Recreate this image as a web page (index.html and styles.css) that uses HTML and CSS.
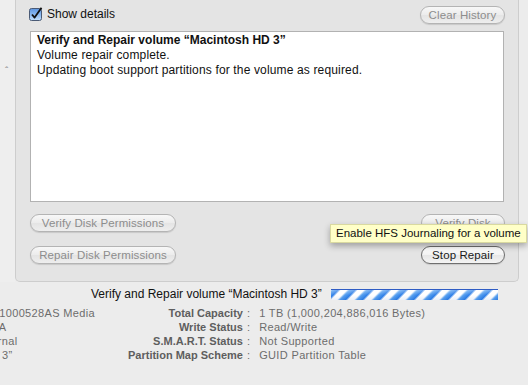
FILE: index.html
```html
<!DOCTYPE html>
<html lang="en">
<head>
    <meta charset="UTF-8">
    <title>Disk Utility - First Aid</title>
    <link rel="stylesheet" href="styles.css">
</head>
<body>
    <div class="window">
        <div class="upper">
            <div class="gutter"><span class="caret">ˆ</span></div>
            <div class="panel">
                <div class="panel-head">
                    <label class="check">
                        <span class="box">
                            <svg width="14" height="14" viewBox="0 0 14 14">
                                <defs>
                                    <linearGradient id="aqua" x1="0" y1="0" x2="0" y2="1">
                                        <stop offset="0" stop-color="#5d95e0"/>
                                        <stop offset="0.5" stop-color="#8ab8f0"/>
                                        <stop offset="1" stop-color="#c4e0fb"/>
                                    </linearGradient>
                                </defs>
                                <rect x="0.5" y="1.5" width="12" height="12" rx="2" fill="url(#aqua)" stroke="#4a5a75"/>
                                <path d="M3 7.5 L5.6 10.6 L12.5 0.8" fill="none" stroke="#111" stroke-width="1.8" stroke-linejoin="round"/>
                            </svg>
                        </span>
                        Show details
                    </label>
                    <button class="btn disabled clear">Clear History</button>
                </div>
                <div class="log">
                    <p class="log-title">Verify and Repair volume “Macintosh HD 3”</p>
                    <p>Volume repair complete.</p>
                    <p>Updating boot support partitions for the volume as required.</p>
                </div>
                <div class="actions">
                    <div class="col">
                        <button class="btn disabled wide">Verify Disk Permissions</button>
                        <button class="btn disabled wide">Repair Disk Permissions</button>
                    </div>
                    <div class="col">
                        <button class="btn disabled narrow">Verify Disk</button>
                        <button class="btn narrow">Stop Repair</button>
                    </div>
                </div>
                <div class="tooltip">Enable HFS Journaling for a volume</div>
            </div>
        </div>

        <div class="status">
            <span class="status-text">Verify and Repair volume “Macintosh HD 3”</span>
            <div class="progress"></div>
        </div>

        <div class="info">
            <div class="info-left">
                <div class="info-left-inner">
                    <div>ST31000528AS Media</div>
                    <div>SATA</div>
                    <div>Internal</div>
                    <div>“HD 3”</div>
                </div>
            </div>
            <div class="info-right">
                <span class="label">Total Capacity</span><span class="sep">:</span><span class="value">1 TB (1,000,204,886,016 Bytes)</span>
                <span class="label">Write Status</span><span class="sep">:</span><span class="value">Read/Write</span>
                <span class="label">S.M.A.R.T. Status</span><span class="sep">:</span><span class="value">Not Supported</span>
                <span class="label">Partition Map Scheme</span><span class="sep">:</span><span class="value">GUID Partition Table</span>
            </div>
        </div>
    </div>
</body>
</html>
```

FILE: styles.css
```css
* {
    margin: 0;
    padding: 0;
    box-sizing: border-box;
}

body {
    font-family: 'Liberation Sans', Arial, sans-serif;
    font-size: 12px;
    letter-spacing: 0.15px;
    background: #ececec;
    color: #111;
    width: 528px;
    height: 385px;
    overflow: hidden;
}

.upper {
    display: flex;
    height: 282px;
}

.gutter {
    width: 15px;
    background: #eeeeee;
}

.caret {
    display: block;
    margin: 66px 0 0 5px;
    font-size: 10px;
    color: #888;
}

.panel {
    position: relative;
    width: 504px;
    height: 282px;
    background: #e4e4e4;
    border: 1px solid #cdcdcd;
    border-top: none;
    border-radius: 0 0 5px 5px;
    padding: 0 14px;
}

.panel-head {
    height: 31px;
    display: flex;
    justify-content: space-between;
    align-items: flex-start;
}

.check {
    display: flex;
    align-items: center;
    gap: 4px;
    margin-top: 7px;
    margin-left: -1px;
    font-size: 12px;
    letter-spacing: 0;
    color: #111;
}

.box {
    display: block;
    width: 14px;
    height: 14px;
}

.btn {
    display: block;
    height: 18px;
    border-radius: 9px;
    border: 1px solid #6f6f6f;
    background: linear-gradient(#ffffff, #f2f2f2 50%, #e6e6e6 51%, #f4f4f4);
    font-family: inherit;
    font-size: 11.5px;
    letter-spacing: 0.1px;
    color: #1a1a1a;
    line-height: 16px;
    text-align: center;
    box-shadow: 0 1px 1px rgba(0, 0, 0, 0.12);
}

.btn.disabled {
    color: #8d8d8d;
    border-color: #b4b4b4;
    background: linear-gradient(#f8f8f8, #ececec 50%, #e4e4e4 51%, #eeeeee);
}

.clear {
    width: 85px;
    margin-top: 6px;
    margin-right: -1px;
}

.log {
    height: 171px;
    background: #fff;
    border: 1px solid #b2b2b2;
    padding: 1px 6px;
    line-height: 15px;
}

.log-title {
    font-weight: bold;
    letter-spacing: 0;
}

.actions {
    display: flex;
    justify-content: space-between;
    margin-top: 12px;
}

.col {
    display: flex;
    flex-direction: column;
    gap: 14px;
}

.wide {
    width: 146px;
}

.narrow {
    width: 84px;
    margin-right: -1px;
}

.tooltip {
    position: absolute;
    left: 314px;
    top: 224px;
    height: 19px;
    padding: 0 5px;
    background: #ffffc7;
    border: 1px solid #d9d9a0;
    font-size: 11.5px;
    letter-spacing: 0;
    line-height: 17px;
    color: #111;
    white-space: nowrap;
    box-shadow: 0 3px 6px rgba(0, 0, 0, 0.3);
}

.status {
    height: 24px;
    display: flex;
    align-items: center;
    gap: 9px;
    padding-left: 91px;
}

.status-text {
    font-size: 12px;
    letter-spacing: 0;
    color: #111;
}

.progress {
    width: 167px;
    height: 11px;
    border-top: 1px solid #2f5cc4;
    background:
        linear-gradient(rgba(255, 255, 255, 0.3), rgba(255, 255, 255, 0) 50%, rgba(0, 60, 160, 0.08)),
        repeating-linear-gradient(-45deg, #2f80e8 0, #5aa2f0 4px, #ffffff 6px, #ffffff 10px, #2f80e8 12px);
}

.info {
    display: flex;
    font-size: 11px;
    line-height: 14px;
    color: #6c6c6c;
}

.info-left {
    width: 128px;
    overflow: hidden;
}

.info-left-inner {
    margin-left: -22px;
    letter-spacing: 0.35px;
    white-space: nowrap;
}

.info-right {
    display: grid;
    grid-template-columns: auto auto 1fr;
}

.label {
    font-weight: bold;
    letter-spacing: 0;
    color: #5e5e5e;
    text-align: right;
}

.sep {
    padding: 0 9px 0 4px;
}

.value {
    letter-spacing: 0.35px;
}
```
